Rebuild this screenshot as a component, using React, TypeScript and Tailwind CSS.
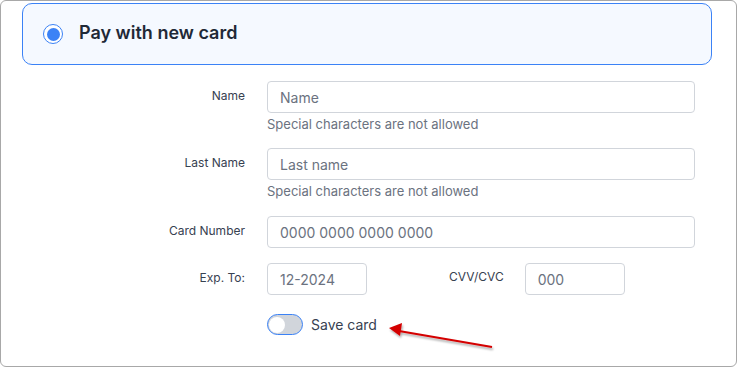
import React from "react";

function Field({ label, placeholder, help }: { label: string; placeholder: string; help?: boolean }) {
  return (
    <div className="flex">
      <div className="w-[223px] pt-[7px] text-right text-[12px] leading-[16px] text-[#374151]">{label}</div>
      <div className="ml-[22px] flex w-[428px] flex-col">
        <div className="flex h-[32px] items-center rounded-[4px] border border-[#d1d5db] bg-white pl-[12px] text-[14px] text-[#6b7280]">
          {placeholder}
        </div>
        {help && <div className="pt-[2px] text-[13px] leading-[18px] text-[#6b7280]">Special characters are not allowed</div>}
      </div>
    </div>
  );
}

export default function App() {
  return (
    <div className="relative h-[368px] w-[738px] bg-white" style={{ fontFamily: "Inter, 'Noto Sans', sans-serif" }}>
      <div className="h-[367px] w-[737px] rounded-[6px] border border-[#a8a8a8] pl-[21px] pt-[2px]">
        <div className="flex h-[62px] w-[690px] items-center rounded-[10px] border border-[#3b82f6] bg-[#f5f9ff] pl-[20px]">
          <div className="flex h-[20px] w-[20px] items-center justify-center rounded-full border-[1.5px] border-[#3b82f6] bg-white">
            <div className="h-[13px] w-[13px] rounded-full bg-[#3b82f6]" />
          </div>
          <div className="ml-[16px] -mt-[4px] text-[18px] font-semibold text-[#1f2937]">Pay with new card</div>
        </div>
        <div className="mt-[16px] flex flex-col">
          <Field label="Name" placeholder="Name" help />
          <div className="h-[15px]" />
          <Field label="Last Name" placeholder="Last name" help />
          <div className="h-[16px]" />
          <Field label="Card Number" placeholder="0000 0000 0000 0000" />
          <div className="mt-[15px] flex">
            <div className="w-[223px] pt-[7px] text-right text-[12px] leading-[16px] text-[#374151]">Exp. To:</div>
            <div className="ml-[22px] flex h-[32px] w-[100px] items-center rounded-[4px] border border-[#d1d5db] pl-[12px] text-[14px] text-[#6b7280]">12-2024</div>
            <div className="ml-[82px] pt-[6px] text-[12px] leading-[16px] text-[#374151]">CVV/CVC</div>
            <div className="ml-[21px] flex h-[32px] w-[100px] items-center rounded-[4px] border border-[#d1d5db] pl-[12px] text-[14px] text-[#6b7280]">000</div>
          </div>
          <div className="mt-[19px] flex items-center pl-[245px]">
            <div className="flex h-[21px] w-[36px] items-center rounded-full border-[1.5px] border-[#3b82f6] bg-[#d1d5db] pl-[1px]">
              <div className="h-[16px] w-[16px] rounded-full bg-white" />
            </div>
            <div className="ml-[8px] text-[14px] text-[#374151]">Save card</div>
          </div>
        </div>
      </div>
      <svg className="absolute left-[385px] top-[318px]" width="115" height="40" viewBox="0 0 115 40">
        <defs>
          <filter id="sh" x="-20%" y="-50%" width="140%" height="200%">
            <feDropShadow dx="1" dy="2" stdDeviation="1.2" floodColor="#000" floodOpacity="0.35" />
          </filter>
        </defs>
        <g filter="url(#sh)">
          <line x1="107" y1="29" x2="14" y2="13" stroke="#d40000" strokeWidth="2" />
          <polygon points="4,10 17,5 15,18" fill="#d40000" />
        </g>
      </svg>
    </div>
  );
}
